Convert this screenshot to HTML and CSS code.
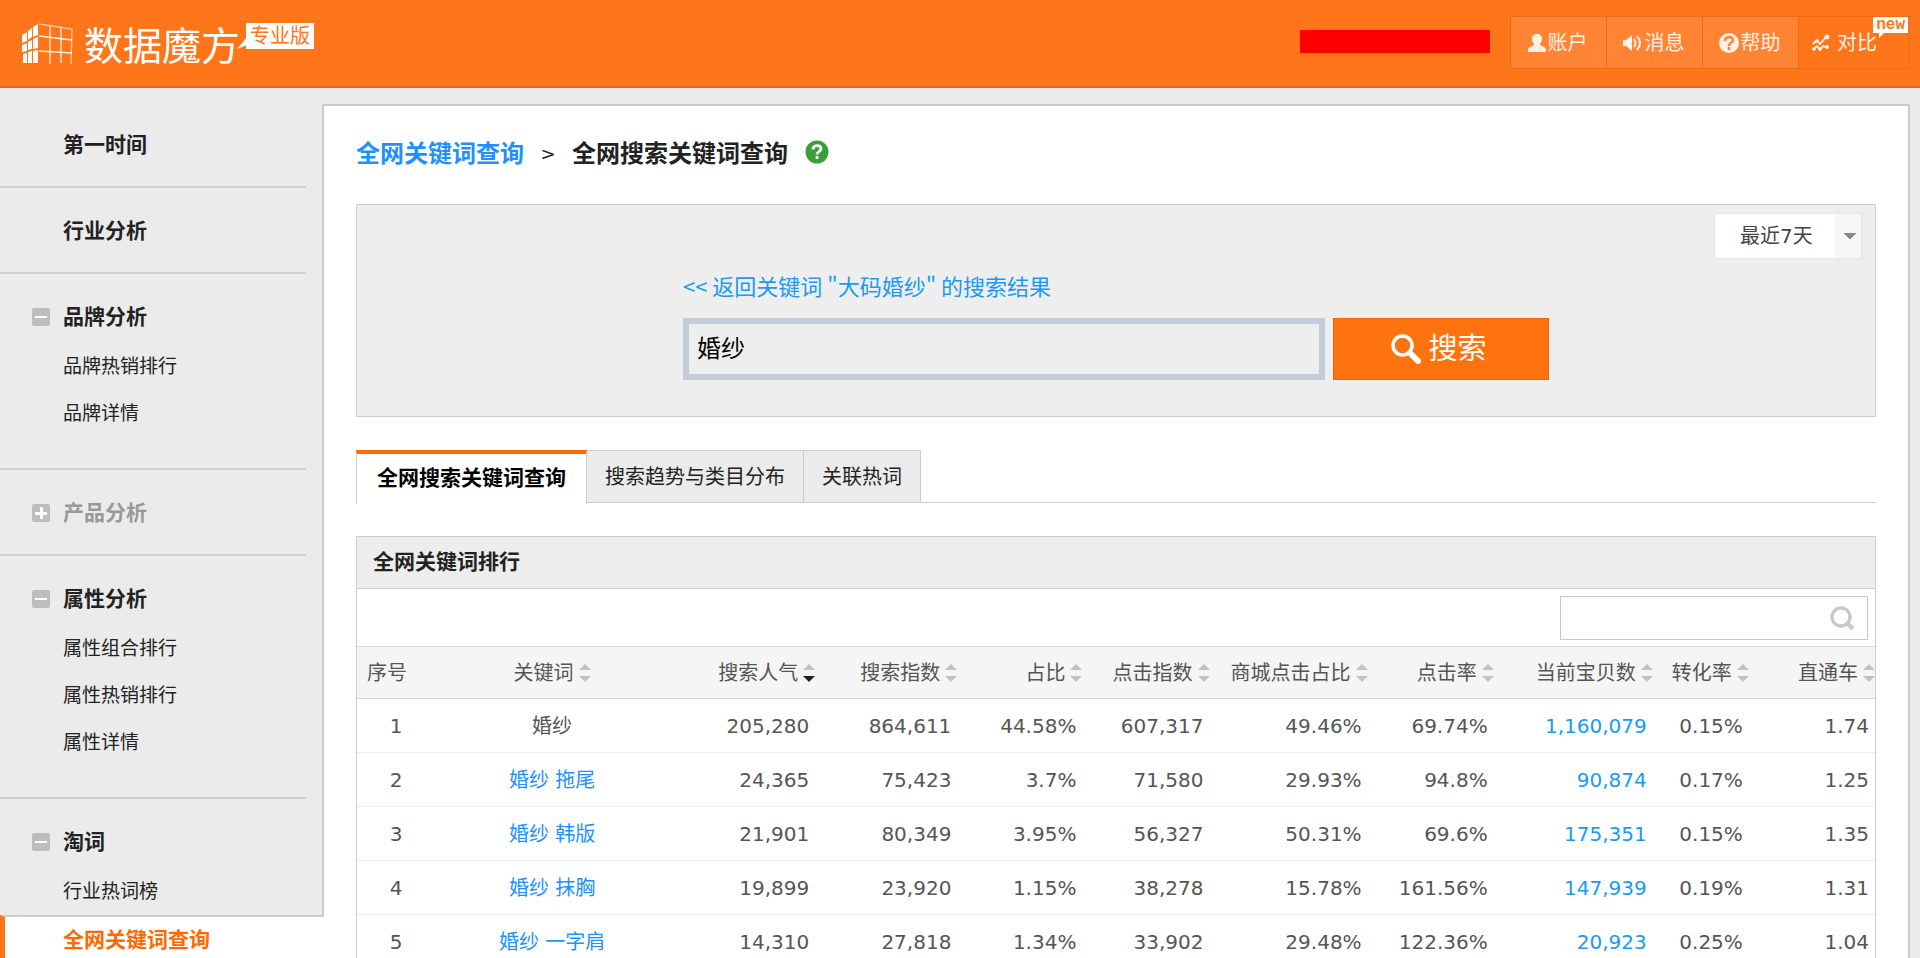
FILE: index.html
```
<!DOCTYPE html>
<html lang="zh-CN">
<head>
<meta charset="utf-8">
<title>数据魔方 - 全网搜索关键词查询</title>
<link rel="stylesheet" href="styles.css">
</head>
<body>
<svg class="defs" aria-hidden="true">
  <symbol id="sort" viewBox="0 0 12 18"><path d="M6 0l6 6H0z"/><path class="down" d="M0 12h12l-6 6z"/></symbol>
</svg>
<header class="header">
  <div class="brand">
    <svg class="cube" viewBox="0 0 52 42" aria-hidden="true">
      <g fill="#fff">
        <path d="M0 12l5-3v9l-5 2zM6 8l4-3v9l-4 3zM11 4l5-3v11l-5 2zM0 22l5-2v8l-5 1zM6 19l4-2v9l-4 1zM11 16l5-2v11l-5 1zM1 31l4-1v10H1zM6 29l4-1v12H6zM11 28l5-1v13h-5z"/>
      </g>
      <g fill="none" stroke="#fff" stroke-width="1.3">
        <path d="M17 1l33 5-1 35" opacity=".6"/><path d="M17 13l33 4M17 28l33 2M28 2v39M39 4v36" opacity=".9"/>
      </g>
    </svg>
    <span class="brand-name">数据魔方</span>
    <span class="edition">专业版<svg class="edition-tail" viewBox="0 0 10 12" aria-hidden="true"><path d="M10 0v8L0 12z" fill="#fff"/></svg></span>
  </div>
  <div class="account">
    <span class="masked"></span>
    <nav class="tools">
      <a class="tool" href="#"><svg width="18" height="18" viewBox="0 0 18 18" aria-hidden="true"><path fill="currentColor" d="M9 0c3 0 5 2 5 5 0 2-1 4-2 5v1l4 2c2 1 2 2 2 5H0c0-3 0-4 2-5l4-2v-1C5 9 4 7 4 5c0-3 2-5 5-5z"/></svg>账户</a>
      <a class="tool" href="#"><svg width="20" height="18" viewBox="0 0 20 18" aria-hidden="true"><path fill="currentColor" d="M0 6h3l6-5v16l-6-5H0z"/><path fill="none" stroke="currentColor" stroke-width="2" d="M11 5q3 4 0 8M14 2q6 7 0 14"/></svg>消息</a>
      <a class="tool" href="#"><svg width="20" height="20" viewBox="0 0 20 20" aria-hidden="true"><circle cx="10" cy="10" r="10" fill="currentColor"/><path fill="none" stroke="#ff8534" stroke-width="2.6" d="M6 8c0-5 8-5 8-1 0 3-4 2-4 6M10 14v3"/></svg>帮助</a>
      <a class="tool tool-plain" href="#"><svg width="18" height="18" viewBox="0 0 18 18" aria-hidden="true"><path fill="none" stroke="currentColor" stroke-width="1.8" d="M1 10l4-4 3 4 7-8M1 16l4-4 3 4 3-4 5 2"/><g fill="currentColor"><circle cx="15" cy="3" r="2.4"/><circle cx="5" cy="7" r="1.8"/><circle cx="8" cy="15" r="1.8"/><circle cx="15" cy="13" r="2"/><circle cx="2" cy="15" r="1.8"/></g></svg><span class="tool-text">对比</span><span class="badge">new</span></a>
    </nav>
  </div>
</header>

<div class="shell">
  <aside class="sidebar">
    <section class="group"><h2 class="group-title">第一时间</h2></section>
    <section class="group"><h2 class="group-title">行业分析</h2></section>
    <section class="group">
      <h2 class="group-title"><button class="toggle" type="button" aria-label="收起"></button>品牌分析</h2>
      <ul class="links"><li><a href="#">品牌热销排行</a></li><li><a href="#">品牌详情</a></li></ul>
    </section>
    <section class="group">
      <h2 class="group-title muted"><button class="toggle toggle-plus" type="button" aria-label="展开"></button>产品分析</h2>
    </section>
    <section class="group">
      <h2 class="group-title"><button class="toggle" type="button" aria-label="收起"></button>属性分析</h2>
      <ul class="links"><li><a href="#">属性组合排行</a></li><li><a href="#">属性热销排行</a></li><li><a href="#">属性详情</a></li></ul>
    </section>
    <section class="group">
      <h2 class="group-title"><button class="toggle" type="button" aria-label="收起"></button>淘词</h2>
      <ul class="links"><li><a href="#">行业热词榜</a></li><li class="current"><a href="#">全网关键词查询</a></li></ul>
    </section>
  </aside>

  <main class="main">
    <div class="crumbs">
      <a href="#">全网关键词查询</a><span class="crumb-sep">&gt;</span><h1>全网搜索关键词查询</h1>
      <svg class="help" viewBox="0 0 24 24" role="img" aria-label="帮助"><circle cx="12" cy="12" r="11.5" fill="#3a9f3a"/><path fill="none" stroke="#fff" stroke-width="2.8" d="M8 9.500c0-5 8-5 8-1 0 3-4 3-4 6M12 16v3"/></svg>
    </div>

    <form class="query">
      <select class="period" aria-label="时间范围"><option>最近7天</option></select>
      <div class="query-body">
        <a class="back" href="#">&lt;&lt; 返回关键词 "大码婚纱" 的搜索结果</a>
        <div class="query-row">
          <input class="query-input" type="text" value="婚纱" aria-label="关键词">
          <button class="query-button" type="button"><svg width="30" height="30" viewBox="0 0 30 30" aria-hidden="true"><circle cx="11.500" cy="11.500" r="9.500" fill="none" stroke="#fff" stroke-width="3.500"/><path d="M19 19l8 8" stroke="#fff" stroke-width="6" stroke-linecap="round"/></svg>搜索</button>
        </div>
      </div>
    </form>

    <nav class="tabs">
      <a class="tab active" href="#">全网搜索关键词查询</a>
      <a class="tab" href="#">搜索趋势与类目分布</a>
      <a class="tab" href="#">关联热词</a>
    </nav>

    <section class="panel">
      <h2 class="panel-title">全网关键词排行</h2>
      <div class="panel-tools">
        <label class="filter"><input type="text" aria-label="筛选"><svg width="25" height="24" viewBox="0 0 25 24" aria-hidden="true"><circle cx="11" cy="11" r="9" fill="none" stroke="#c9c9c9" stroke-width="3.500"/><path d="M17 17l6 6" stroke="#c9c9c9" stroke-width="4"/></svg></label>
      </div>
      <table class="rank">
        <colgroup><col class="c1"><col class="c2"><col class="c3"><col class="c4"><col class="c5"><col class="c6"><col class="c7"><col class="c8"><col class="c9"><col class="c10"><col class="c11"></colgroup>
        <thead>
          <tr>
            <th>序号</th>
            <th>关键词<svg class="sort"><use href="#sort"/></svg></th>
            <th>搜索人气<svg class="sort" viewBox="0 0 12 18"><path d="M6 0l6 6H0z"/><path class="on" d="M0 12h12l-6 6z"/></svg></th>
            <th>搜索指数<svg class="sort"><use href="#sort"/></svg></th>
            <th>占比<svg class="sort"><use href="#sort"/></svg></th>
            <th>点击指数<svg class="sort"><use href="#sort"/></svg></th>
            <th>商城点击占比<svg class="sort"><use href="#sort"/></svg></th>
            <th>点击率<svg class="sort"><use href="#sort"/></svg></th>
            <th>当前宝贝数<svg class="sort"><use href="#sort"/></svg></th>
            <th>转化率<svg class="sort"><use href="#sort"/></svg></th>
            <th>直通车<svg class="sort"><use href="#sort"/></svg></th>
          </tr>
        </thead>
        <tbody>
          <tr><td>1</td><td>婚纱</td><td>205,280</td><td>864,611</td><td>44.58%</td><td>607,317</td><td>49.46%</td><td>69.74%</td><td><a class="count" href="#">1,160,079</a></td><td>0.15%</td><td>1.74</td></tr>
          <tr><td>2</td><td><a href="#">婚纱 拖尾</a></td><td>24,365</td><td>75,423</td><td>3.7%</td><td>71,580</td><td>29.93%</td><td>94.8%</td><td><a class="count" href="#">90,874</a></td><td>0.17%</td><td>1.25</td></tr>
          <tr><td>3</td><td><a href="#">婚纱 韩版</a></td><td>21,901</td><td>80,349</td><td>3.95%</td><td>56,327</td><td>50.31%</td><td>69.6%</td><td><a class="count" href="#">175,351</a></td><td>0.15%</td><td>1.35</td></tr>
          <tr><td>4</td><td><a href="#">婚纱 抹胸</a></td><td>19,899</td><td>23,920</td><td>1.15%</td><td>38,278</td><td>15.78%</td><td>161.56%</td><td><a class="count" href="#">147,939</a></td><td>0.19%</td><td>1.31</td></tr>
          <tr><td>5</td><td><a href="#">婚纱 一字肩</a></td><td>14,310</td><td>27,818</td><td>1.34%</td><td>33,902</td><td>29.48%</td><td>122.36%</td><td><a class="count" href="#">20,923</a></td><td>0.25%</td><td>1.04</td></tr>
        </tbody>
      </table>
    </section>
  </main>
</div>
</body>
</html>
```
FILE: styles.css
```
* { box-sizing: border-box; }

body {
  margin: 0;
  height: 100vh;
  display: flex;
  flex-direction: column;
  overflow: hidden;
  background: #ebebeb;
  color: #222;
  font: 20px/28px "DejaVu Sans", "Noto Sans CJK SC", sans-serif;
}

a { color: inherit; text-decoration: none; }
h1, h2, ul { margin: 0; padding: 0; font-weight: bold; }
ul { list-style: none; font-weight: normal; }
button, input, select { font: inherit; color: inherit; border-radius: 0; }
.defs { display: none; }

/* header */
.header {
  flex: none;
  display: flex;
  justify-content: space-between;
  align-items: flex-start;
  height: 88px;
  padding: 16px 10px 0 22px;
  background: #ff751a;
  border-bottom: 2px solid #e8641a;
  color: #fff;
}
.brand { display: flex; align-items: flex-start; padding-top: 7px; }
.cube { width: 52px; height: 42px; margin-right: 10px; }
.brand-name { font: 39px/40px "Noto Sans CJK SC", sans-serif; }
.edition {
  position: relative;
  margin-left: 6px;
  padding: 0 4px;
  background: #fff;
  color: #ff751a;
  line-height: 26px;
}
.edition-tail { position: absolute; left: -9px; top: 14px; width: 10px; height: 12px; }
.account { display: flex; align-items: flex-start; gap: 20px; }
.masked { width: 190px; height: 23px; margin-top: 14px; background: #f00; }
.tools { display: flex; border: 1px solid #f06c14; border-right: 0; }
.tool {
  position: relative;
  display: flex;
  align-items: center;
  justify-content: center;
  gap: 2px;
  width: 96px;
  height: 51px;
  padding-right: 2px;
  background: #ff8534;
  border-right: 1px solid #f06c14;
  color: #fff1e6;
}
.tool-plain { justify-content: flex-start; width: 111px; padding-left: 13px; gap: 7px; background: none; }
.badge {
  position: absolute;
  right: 1px;
  top: 0;
  padding: 0 3px;
  background: #fff;
  color: #ff751a;
  font: bold 16px/16px "Liberation Mono", monospace;
}
.badge::after {
  content: "";
  position: absolute;
  left: 6px;
  top: 16px;
  border-top: 5px solid #fff;
  border-right: 5px solid transparent;
}

/* layout */
.shell { flex: 1; display: flex; min-height: 0; }
.sidebar { flex: none; width: 322px; padding-top: 14px; }

.group { position: relative; padding: 18px 0 18px 63px; }
.group:not(:last-child)::after {
  content: "";
  position: absolute;
  left: 0;
  right: 16px;
  bottom: 0;
  border-bottom: 2px solid #d0d0d0;
}
.group-title { display: flex; align-items: center; height: 50px; font-size: 21px; }
.muted { color: #999; }
.toggle {
  width: 18px;
  height: 18px;
  margin: 0 13px 0 -31px;
  padding: 0;
  border: 0;
  border-radius: 2px;
  background: linear-gradient(#fff, #fff) center / 12px 2px no-repeat #bdbdbd;
}
.toggle-plus {
  background: linear-gradient(#fff, #fff) center / 12px 3px no-repeat,
    linear-gradient(#fff, #fff) center / 3px 12px no-repeat #bdbdbd;
}
.links { padding: 1px 0 15px; font-size: 19px; line-height: 47px; }
.current {
  position: relative;
  z-index: 1;
  margin: 0 -2px 0 -63px;
  padding-left: 58px;
  border-top: 2px solid #ccc;
  border-left: 5px solid #ff751a;
  background: #fff;
  color: #ff6a00;
  font-size: 21px;
  font-weight: bold;
}

.main {
  flex: 1;
  min-width: 0;
  margin: 16px 10px 0 0;
  padding: 32px 32px 0;
  background: #fff;
  border: 2px solid #ccc;
  border-bottom: 0;
}

/* breadcrumb */
.crumbs { display: flex; align-items: center; height: 32px; font-size: 24px; font-weight: bold; }
.crumbs h1 { font-size: 24px; }
.crumbs a { color: #1e90ff; }
.crumb-sep { width: 48px; text-align: center; font-size: 18px; font-weight: normal; }
.help { width: 24px; height: 24px; margin: 0 0 4px 17px; }

/* query */
.query {
  display: flex;
  flex-direction: column;
  margin-top: 34px;
  padding: 8px 13px 36px;
  background: #eee;
  border: 1px solid #ccc;
}
.period {
  align-self: flex-end;
  width: 148px;
  height: 46px;
  padding: 0 25px;
  appearance: none;
  border: 1px solid #e4e4e4;
  color: #444;
  background:
    linear-gradient(to bottom left, #888 50%, transparent 0) right 11px center / 6px 7px no-repeat,
    linear-gradient(to bottom right, #888 50%, transparent 0) right 5px center / 6px 7px no-repeat,
    linear-gradient(#f7f7f7, #f7f7f7) right / 26px 100% no-repeat #fff;
}
.query-body { width: 866px; margin: 9px auto 0; }
.back {
  display: block;
  margin-bottom: 16px;
  color: #1a9bf0;
  font: 22px/34px "Noto Sans CJK SC", sans-serif;
}
.query-row { display: flex; gap: 8px; height: 62px; }
.query-input {
  flex: 1;
  min-width: 0;
  padding: 0 8px;
  border: 6px solid #c3cdd9;
  background: #eee;
  color: #000;
  font-size: 24px;
}
.query-button {
  display: flex;
  align-items: center;
  justify-content: center;
  gap: 7px;
  width: 216px;
  padding: 0 10px 0 6px;
  border: 1px solid #f26500;
  background: #ff730f;
  color: #fff;
  font-size: 29px;
}

/* tabs */
.tabs { display: flex; height: 53px; margin-top: 33px; border-bottom: 1px solid #ccc; }
.tab {
  padding: 0 18px;
  border: 1px solid #ccc;
  border-left: 0;
  border-bottom: 0;
  background: #ebebeb;
  line-height: 52px;
}
.active {
  height: 54px;
  padding: 0 20px;
  border-top: 4px solid #ff6a00;
  border-left: 1px solid #ccc;
  background: #fff;
  color: #000;
  font-size: 21px;
  font-weight: bold;
  line-height: 48px;
}

/* ranking */
.panel { margin-top: 33px; border: 1px solid #ccc; }
.panel-title { padding-left: 16px; background: #ededed; border-bottom: 1px solid #ccc; font-size: 21px; line-height: 51px; }
.panel-tools { display: flex; justify-content: flex-end; padding: 7px 7px 6px; }
.filter {
  display: flex;
  align-items: center;
  width: 308px;
  height: 44px;
  padding-right: 12px;
  border: 1px solid #c8c8c8;
}
.filter input { flex: 1; min-width: 0; height: 100%; padding: 0 8px; border: 0; background: none; }

.rank { width: 100%; table-layout: fixed; border-collapse: separate; border-spacing: 0; color: #555; }
.rank td { height: 54px; padding: 0 6px 0 0; border-bottom: 1px solid #eee; text-align: right; white-space: nowrap; }
.rank th {
  height: 53px;
  padding: 0;
  background: #f5f5f5;
  border-top: 1px solid #d8d8d8;
  border-bottom: 1px solid #d8d8d8;
  font-weight: normal;
  text-align: right;
  white-space: nowrap;
}
.rank th:first-child { padding-left: 10px; text-align: left; }
.rank th:nth-child(2), .rank td:nth-child(-n+2) { padding: 0; text-align: center; }
.rank a { color: #1e90ff; }
.rank .count { color: #1a9bf0; }
.sort { width: 12px; height: 18px; margin-left: 5px; vertical-align: -2px; fill: #c2c2c2; }
.sort .on { fill: #222; }
.c1 { width: 78px; }
.c2 { width: 234px; }
.c3 { width: 146px; }
.c4 { width: 142px; }
.c5 { width: 125px; }
.c6 { width: 127px; }
.c7 { width: 158px; }
.c8 { width: 126px; }
.c9 { width: 159px; }
.c10 { width: 96px; }
.c11 { width: 126px; }
```
